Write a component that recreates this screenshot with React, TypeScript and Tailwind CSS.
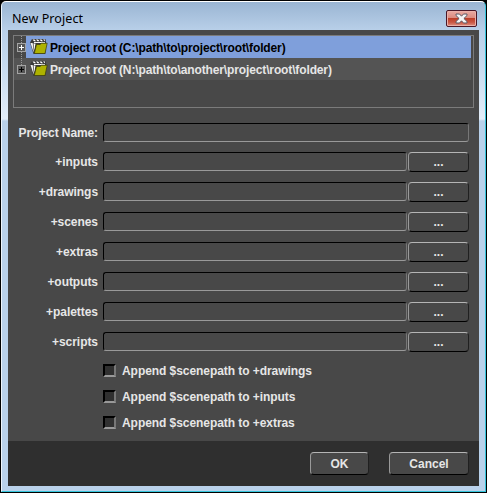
import React from "react";

const folders = ["+inputs", "+drawings", "+scenes", "+extras", "+outputs", "+palettes", "+scripts"];
const options = ["+drawings", "+inputs", "+extras"];
const roots = [
  { path: "C:\\path\\to\\project\\root\\folder", selected: true },
  { path: "N:\\path\\to\\another\\project\\root\\folder", selected: false },
];

function FolderIcon() {
  return (
    <svg width="18" height="16" viewBox="0 0 18 16" className="shrink-0">
      <path d="M2 0h13.500l.8 5-1 10H3.500L0 3.500Z" fill="#3b3b3b" />
      <path d="M.5 4h2.200l1.300 9.500L2.800 11Z" fill="#f2f2f2" />
      <path d="M3.500 4.500h2l-1.200 7Z" fill="#fff" />
      <path d="M2.500.5h2L6 2.300H4ZM6 .5h2l1.500 1.800h-2ZM9.500.5h2L13 2.300h-2ZM13 .5h2v1.800Z" fill="#fff" />
      <path d="M4 3h11v1H4Z" fill="#f4f4f4" />
      <path d="M6.500 5.500H10l1.500-1.300h5.700L15 14.500H4.300Z" fill="#aeb200" stroke="#3b3c0c" strokeWidth=".7" />
    </svg>
  );
}

function Expander({ selected }: { selected: boolean }) {
  return (
    <svg width="12" height="22" viewBox="0 0 12 22" shapeRendering="crispEdges" className="shrink-0">
      <path d={selected ? "M7.500 0v22" : "M7.500 0v7"} stroke="#999" strokeDasharray="1 1" />
      <rect x="3.500" y="7.500" width="8" height="8" fill="#555" stroke="#a3a3a3" />
      <path d="M5 11.500h5M7.500 9v5" stroke={selected ? "#fff" : "#000"} />
    </svg>
  );
}

function TextField({ label, className }: { label: string; className: string }) {
  return (
    <input
      aria-label={label}
      className={`h-[19px] rounded-[3px] border border-t-black border-r-[#777] border-b-[#999] border-l-black bg-[#484848] px-1 outline-none ${className}`}
    />
  );
}

function Button({ children, className }: { children: React.ReactNode; className: string }) {
  return (
    <button
      className={`flex items-center justify-center rounded-[4px] border border-t-[#b5b5b5] border-r-[#202020] border-b-black border-l-[#999] bg-[#484848] font-bold ${className}`}
    >
      {children}
    </button>
  );
}

export default function App() {
  return (
    <div className="h-[493px] w-[487px] bg-black pt-px pr-px pb-px font-['Liberation_Sans',Arial,sans-serif] text-[12px] leading-[14px] font-bold text-[#e6e6e6]">
      <div className="ml-px flex h-[491px] w-[485px] flex-col rounded-t-[5px] border border-t-white border-r-[#35c5dc] border-b-[#35c5dc] border-l-[#eef5fc] bg-[linear-gradient(180deg,#9ab5d3_0px,#b9d0e9_29px,#c5d9ee_60px,#e3edf8_117px,#b9d1ea_119px,#b9d1ea_100%)] pr-[6px] pb-[5px] pl-[6px]">
        <header className="flex h-[28px] shrink-0 items-center justify-between pr-[4px] pl-[4px]">
          <h1 className="pt-[5px] font-['Noto_Sans',sans-serif] text-[12.500px] leading-4 font-normal tracking-[0.08px] text-black">New Project</h1>
          <button
            aria-label="Close"
            className="mt-[4px] mr-[-2px] flex h-[17px] w-[31px] items-center justify-center rounded-[2px] border border-[#4a1726] bg-[linear-gradient(180deg,#eaaaa2_0%,#dc8c80_45%,#bd3f28_50%,#c95643_75%,#df9182_100%)] shadow-[inset_0_0_0_1px_#eab0a8]"
          >
            <svg width="13" height="11" viewBox="0 0 13 11" className="shrink-0">
              <path d="M1 1h3.500l2 2.200L8.500 1H12v1.500L8.900 5.500 12 8.500V10H8.500l-2-2.200L4.500 10H1V8.500l3.100-3L1 2.500Z" fill="#f5f5f5" stroke="#5b5864" />
            </svg>
          </button>
        </header>

        <main className="flex min-h-0 w-[471px] flex-1 flex-col bg-[#484848]">
          <section className="mt-[5px] ml-[5px] h-[73px] w-[461px] border border-[#7b7b7b] pr-[2px]">
            {roots.map((r) => (
              <div key={r.path} className={r.selected ? "flex h-[22px]" : "flex h-[22px] bg-[#545454]"}>
                <Expander selected={r.selected} />
                <div
                  className={
                    r.selected
                      ? "flex flex-1 items-center bg-[#7f9fdb] pl-[4px] text-black"
                      : "flex flex-1 items-center pl-[4px]"
                  }
                >
                  <FolderIcon />
                  <span className="ml-[2px] pt-px tracking-[-0.13px] whitespace-nowrap">Project root ({r.path})</span>
                </div>
              </div>
            ))}
          </section>

          <form className="mt-[15px] flex flex-1 flex-col">
            <div className="flex h-[19px] items-center">
              <label className="w-[90px] text-right tracking-[-0.1px] whitespace-nowrap">Project Name:</label>
              <TextField label="Project Name" className="ml-[5px] w-[366px]" />
            </div>
            <div className="mt-[10px] flex flex-col gap-[10px]">
              {folders.map((f) => (
                <div key={f} className="flex h-[20px] items-start">
                  <label className="w-[90px] pt-[3px] text-right tracking-[-0.05px]">{f}</label>
                  <TextField label={f} className="ml-[5px] w-[304px]" />
                  <Button className="ml-px h-[20px] w-[61px]">...</Button>
                </div>
              ))}
            </div>
            <div className="mt-[12px] ml-[95px] flex flex-col gap-[13px]">
              {options.map((o) => (
                <label key={o} className="flex h-[13px] items-center">
                  <span className="h-[13px] w-[13px] border-2 border-t-black border-r-[#777] border-b-[#999] border-l-black bg-[#303030]" />
                  <span className="ml-[6px] tracking-[-0.06px]">Append $scenepath to {o}</span>
                </label>
              ))}
            </div>
          </form>

          <footer className="flex h-[45px] shrink-0 items-start justify-end gap-[20px] bg-[#2f2f2f] pt-[11px] pr-[10px]">
            <Button className="h-[23px] w-[59px]">OK</Button>
            <Button className="h-[23px] w-[80px]">Cancel</Button>
          </footer>
        </main>
      </div>
    </div>
  );
}
